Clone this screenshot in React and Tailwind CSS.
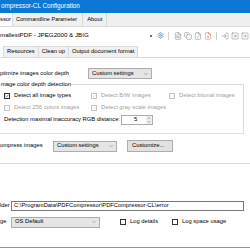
import React from 'react';
import { Settings, FileText, Copy, FileCheck, FileX, LogIn, SquareArrowRight, ChevronDown, ChevronUp, Check } from 'lucide-react';

const font = { fontFamily: '"Liberation Sans", Arial, sans-serif' };

const Box = ({ checked, disabled }) => (
  <span
    className={`w-[6px] h-[6px] border flex items-center justify-center bg-white ${
      disabled ? 'border-[#c4c4c4]' : 'border-[#333]'
    }`}
  >
    {checked && <Check size={6} strokeWidth={3} className={disabled ? 'text-[#c4c4c4]' : 'text-[#111]'} />}
  </span>
);

const CheckItem = ({ label, checked, disabled }) => (
  <div className="flex items-center gap-[4px]">
    <Box checked={checked} disabled={disabled} />
    <span className={disabled ? 'text-[#a0a0a0]' : ''}>{label}</span>
  </div>
);

const Combo = ({ value, className }) => (
  <div className={`h-[11px] bg-[#e5e5e5] border border-[#adadad] flex items-center justify-between pl-[3px] pr-[2px] ${className}`}>
    <span>{value}</span>
    <ChevronDown size={6} strokeWidth={1.5} className="text-[#555]" />
  </div>
);

const Tool = ({ children }) => <span className="w-[10px] flex justify-center">{children}</span>;

export default function App() {
  return (
    <div className="w-[250px] h-[250px] overflow-hidden bg-white flex flex-col text-[5.8px] leading-none text-black" style={font}>
      <div className="h-[13px] shrink-0 bg-[#0a78d4] text-white flex items-center pl-[1px] text-[6.3px]">
        ompressor-CL Configuration
      </div>

      <div className="h-[14px] shrink-0 bg-[#f0f0f0] flex border-b border-[#dadada]">
        <div className="w-[13px] bg-white border-r border-[#dadada] flex items-center">ssor</div>
        <div className="pl-[3px] pr-[5px] flex items-center border-r border-[#dadada] text-[5.5px]">Commandline Parameter</div>
        <div className="px-[4px] flex items-center border-r border-[#dadada]">About</div>
      </div>

      <div className="h-[17px] shrink-0 flex items-center justify-between">
        <span className="text-[6.2px]">mallestPDF - JPEG2000 &amp; JBIG</span>
        <div className="flex items-center text-[#666]">
          <span className="w-[2px] h-[2px] rounded-full bg-[#444] mr-[5px]" />
          <Settings size={7} strokeWidth={2} className="text-[#4a7bb5]" />
          <span className="w-px h-[8px] bg-[#d0d0d0] mx-[4px]" />
          <Tool><FileText size={8} strokeWidth={1.3} /></Tool>
          <Tool><Copy size={8} strokeWidth={1.3} /></Tool>
          <Tool><FileCheck size={8} strokeWidth={1.3} /></Tool>
          <Tool><FileX size={8} strokeWidth={1.3} className="text-[#c0504d]" /></Tool>
          <span className="w-px h-[8px] bg-[#d0d0d0] mx-[3px]" />
          <Tool><LogIn size={8} strokeWidth={1.3} /></Tool>
          <Tool><SquareArrowRight size={8} strokeWidth={1.3} /></Tool>
          <Tool><SquareArrowRight size={8} strokeWidth={1.3} /></Tool>
        </div>
      </div>

      <div className="h-[14px] shrink-0 flex items-end pl-[3px] border-b border-[#dadada]">
        <div className="h-[11px] px-[3px] flex items-center border border-b-0 border-[#dadada] bg-[#f0f0f0]">Resources</div>
        <div className="h-[11px] px-[3px] flex items-center border border-l-0 border-b-0 border-[#dadada] bg-[#f0f0f0]">Clean up</div>
        <div className="h-[11px] px-[3px] flex items-center border border-l-0 border-b-0 border-[#dadada] bg-[#f0f0f0]">Output document format</div>
      </div>

      <div className="h-[106px] shrink-0 border-b border-[#dadada] flex flex-col pr-[6px]">
        <div className="mt-[10px] flex items-center h-[11px]">
          <span className="w-[88px]">ptimize images color depth</span>
          <Combo value="Custom settings" className="w-[64px]" />
        </div>

        <fieldset className="mt-[3px] -ml-[8px] border border-[#dcdcdc] pl-[11px] pb-[3px] h-[52px]">
          <legend className="px-0 -ml-[3px]">mage color depth detection</legend>
          <div className="grid grid-cols-[87px_78px_1fr] mt-[5px] gap-y-[6px]">
            <CheckItem label="Detect all image types" checked />
            <CheckItem label="Detect B/W images" checked disabled />
            <CheckItem label="Detect bitonal images" checked disabled />
            <CheckItem label="Detect 256 colors images" checked disabled />
            <CheckItem label="Detect gray scale images" checked disabled />
            <span />
          </div>
          <div className="flex items-center mt-[4px]">
            <span className="w-[117px]">Detection maximal inaccuracy RGB distance:</span>
            <div className="w-[32px] h-[10px] border border-[#adadad] bg-white flex items-center justify-between pl-[12px]">
              <span>5</span>
              <span className="flex flex-col items-center w-[6px] bg-[#f0f0f0] h-full justify-center">
                <ChevronUp size={4} strokeWidth={2} />
                <ChevronDown size={4} strokeWidth={2} />
              </span>
            </div>
          </div>
        </fieldset>

        <div className="mt-[6px] flex items-center h-[12px]">
          <span className="w-[53px]">ompress images</span>
          <Combo value="Custom settings" className="w-[64px]" />
          <div className="ml-[10px] w-[46px] h-[12px] bg-[#e1e1e1] border border-[#adadad] flex items-center pl-[4px]">Customize...</div>
        </div>
      </div>

      <div className="h-[37px] shrink-0" />

      <div className="flex items-center h-[10px] pr-[6px]">
        <span className="w-[11px]">lder</span>
        <div className="flex-1 h-[10px] border border-[#7a7a7a] bg-white flex items-center pl-[2px]">
          C:\ProgramData\PDFCompressor\PDFCompressor-CL\error
        </div>
      </div>

      <div className="flex items-center h-[10px] mt-[6px]">
        <span className="w-[11px]">ge</span>
        <Combo value="OS Default" className="w-[89px] h-[10px]" />
        <div className="ml-[20px]"><CheckItem label="Log details" /></div>
        <div className="ml-[14px]"><CheckItem label="Log space usage" /></div>
      </div>

      <div className="flex-1" />
      <div className="h-px bg-[#5aa3e0] mb-[2px]" />
    </div>
  );
}
